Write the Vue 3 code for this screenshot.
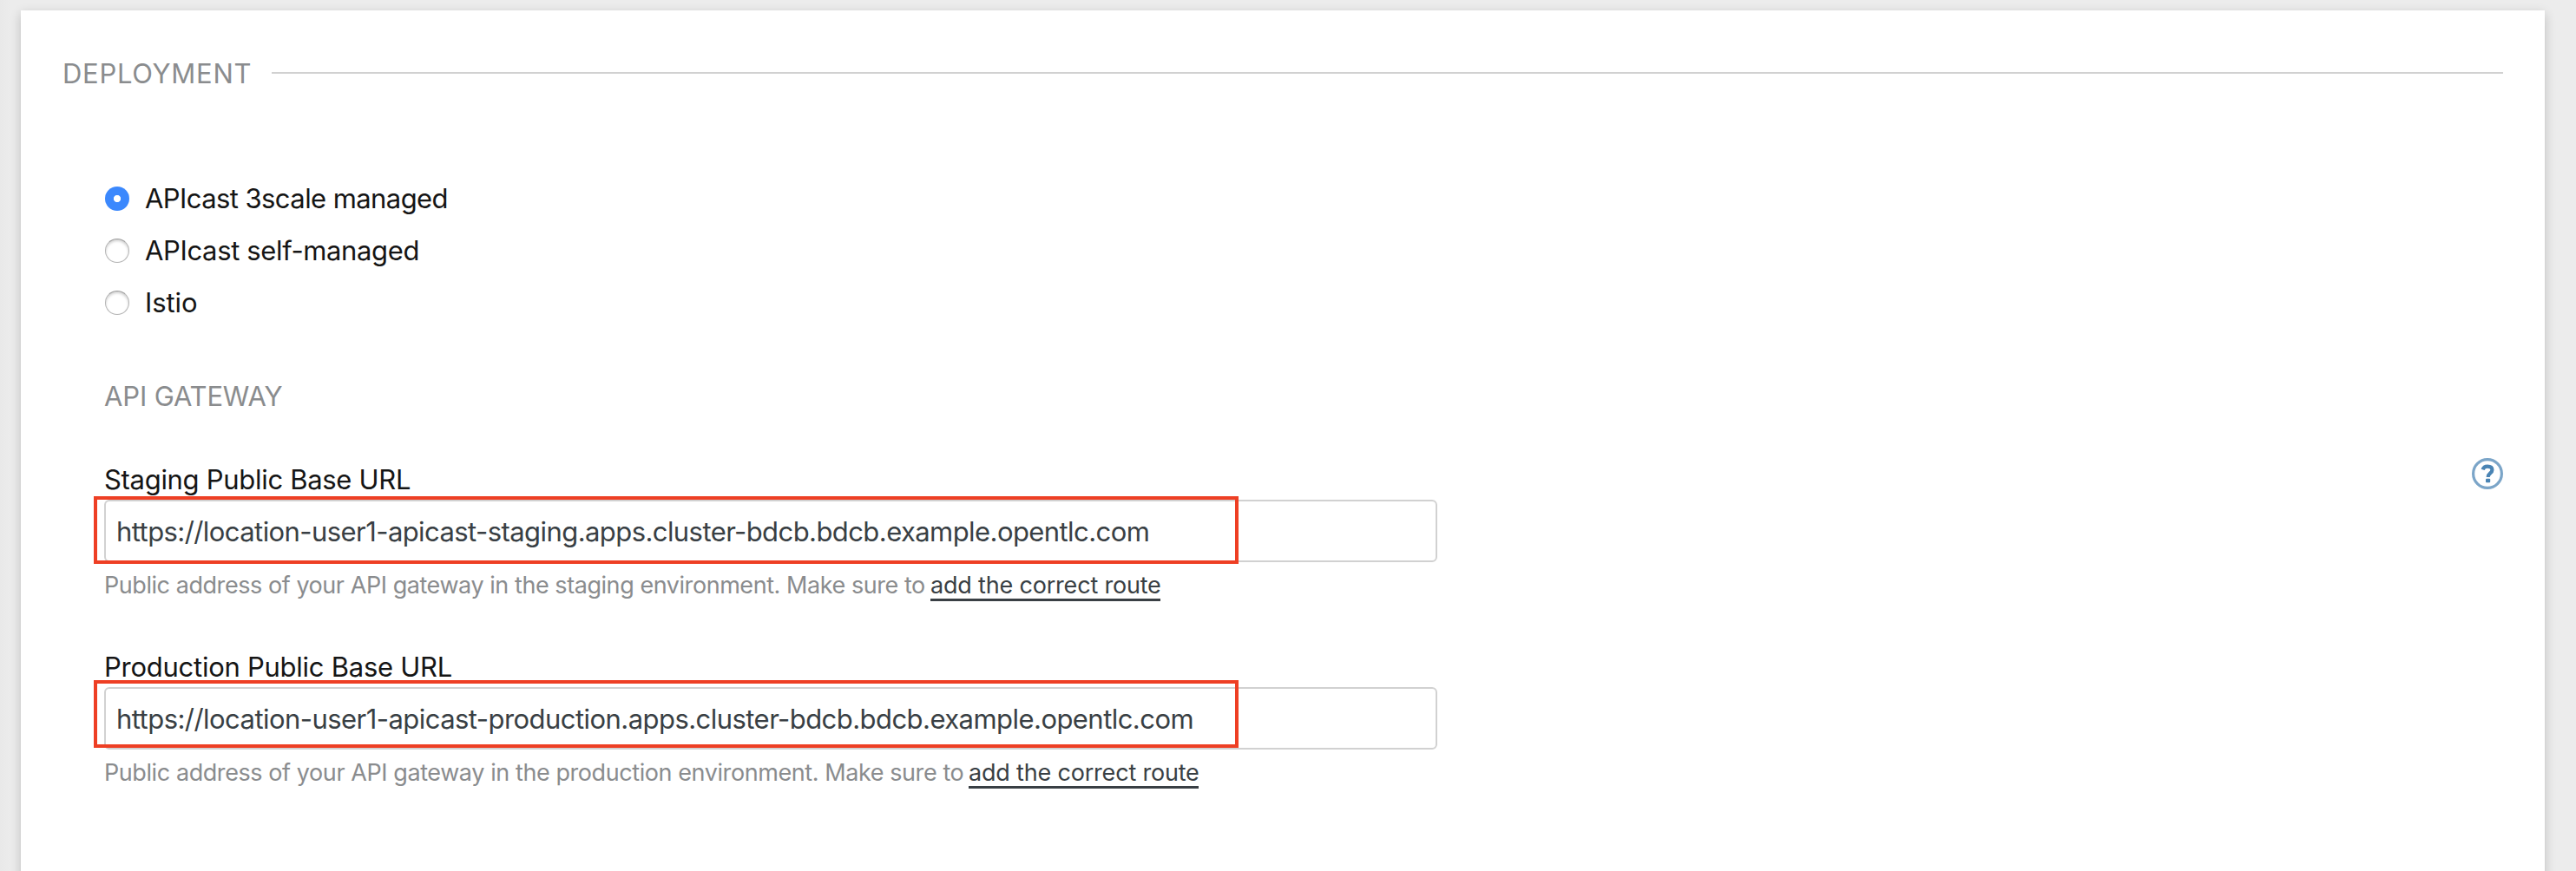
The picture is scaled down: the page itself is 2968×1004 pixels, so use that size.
<script setup>
import { ref } from 'vue'

const deployment = ref('managed')
const options = [
  { value: 'managed', label: 'APIcast 3scale managed' },
  { value: 'self-managed', label: 'APIcast self-managed' },
  { value: 'istio', label: 'Istio' },
]

const fields = ref([
  {
    id: 'staging',
    label: 'Staging Public Base URL',
    url: 'https://location-user1-apicast-staging.apps.cluster-bdcb.bdcb.example.opentlc.com',
    hint: 'Public address of your API gateway in the staging environment. Make sure to',
  },
  {
    id: 'production',
    label: 'Production Public Base URL',
    url: 'https://location-user1-apicast-production.apps.cluster-bdcb.bdcb.example.opentlc.com',
    hint: 'Public address of your API gateway in the production environment. Make sure to',
  },
])
</script>

<template>
  <div class="page">
    <main class="panel">
      <header class="section-head">
        <h2>DEPLOYMENT</h2>
        <span class="rule"></span>
      </header>

      <div class="options">
        <label v-for="o in options" :key="o.value" class="option" :class="o.value">
          <input v-model="deployment" type="radio" name="deployment" :value="o.value" />
          <span>{{ o.label }}</span>
        </label>
      </div>

      <div class="gateway">
        <div class="fields">
          <h3>API GATEWAY</h3>
          <div v-for="f in fields" :key="f.id" class="field" :class="f.id">
            <label :for="f.id">{{ f.label }}</label>
            <div class="control">
              <input :id="f.id" v-model="f.url" type="text" spellcheck="false" />
              <span class="highlight"></span>
            </div>
            <p class="hint">
              <span class="hint-text">{{ f.hint }}</span>
              <a>add the correct route</a>
            </p>
          </div>
        </div>
        <svg class="help" viewBox="0 0 36 36" width="36" height="36">
          <circle cx="18" cy="18" r="16.4" fill="none" stroke="#7ba5c8" stroke-width="3.2" />
          <path d="M12.6 13.4C13.4 10.8 15.4 9.7 18 9.7c3.2 0 5.4 1.4 5.4 4 0 3.9-4.7 3.7-4.7 8.3" fill="none" stroke="#4a84b4" stroke-width="4.2" />
          <rect x="16" y="23.8" width="5.2" height="4.4" rx="1" fill="#4a84b4" />
        </svg>
      </div>
    </main>
  </div>
</template>

<style>
body {
  margin: 0;
  background: #ececec;
}
</style>

<style scoped>
.page {
  box-sizing: border-box;
  height: 1004px;
  padding: 12px 36px 0 24px;
  overflow: hidden;
  background: linear-gradient(90deg, #e9e9e9 0, #ececec 12px);
  font: 400 31px/40px Inter, "Liberation Sans", sans-serif;
  color: #151515;
}
.panel {
  box-sizing: border-box;
  height: 1040px;
  padding: 53px 48px 0;
  background: #fff;
  box-shadow: 0 4px 12px rgba(0, 0, 0, 0.2);
}
h2,
h3,
p {
  margin: 0;
  font-size: inherit;
  font-weight: 400;
}
.section-head {
  display: flex;
  align-items: center;
  height: 40px;
  color: #8a8c8e;
}
h2 {
  width: 241px;
  letter-spacing: 0.7px;
}
.rule {
  flex: 1;
  height: 2px;
  margin-bottom: 2px;
  background: #d1d1d1;
}
.options {
  padding: 94px 0 0 48px;
}
.option {
  display: flex;
  align-items: center;
  height: 60px;
  letter-spacing: -0.58px;
}
.option.self-managed {
  letter-spacing: -0.36px;
}
.option.istio {
  letter-spacing: -0.1px;
}
.option input {
  appearance: none;
  box-sizing: border-box;
  width: 28px;
  height: 28px;
  margin: 0 18px 0 1px;
  border: 1px solid #b4b4b4;
  border-top-color: #989898;
  border-radius: 50%;
  background: #fff;
  box-shadow: inset 0 2px 3px rgba(0, 0, 0, 0.18);
}
.option input:checked {
  border: 0;
  background: radial-gradient(circle, #fff 3.7px, #3b88fd 4.5px);
  box-shadow: none;
}
.gateway {
  display: flex;
  justify-content: space-between;
  align-items: flex-start;
  padding: 58px 0 0 48px;
}
.fields {
  width: 1536px;
}
h3 {
  margin-bottom: 56px;
  color: #8a8c8e;
  letter-spacing: -0.15px;
}
.field {
  margin-bottom: 57px;
}
.field > label {
  display: block;
  height: 43px;
}
.staging > label {
  letter-spacing: -0.3px;
}
.production > label {
  letter-spacing: -0.26px;
}
.control {
  position: relative;
}
.control input {
  display: block;
  box-sizing: border-box;
  width: 100%;
  height: 72px;
  padding: 0 12px;
  border: 2px solid #d1d1d1;
  border-radius: 6px;
  outline: 0;
  background: #fff;
  font: inherit;
  color: #393f44;
}
.staging input {
  letter-spacing: -0.575px;
}
.production input {
  letter-spacing: -0.55px;
}
.highlight {
  position: absolute;
  box-sizing: border-box;
  top: -4px;
  left: -12px;
  width: 1319px;
  height: 78px;
  border: 4px solid #ee3f24;
  pointer-events: none;
}
.production .highlight {
  top: -8px;
}
.hint {
  display: flex;
  height: 36px;
  padding-top: 8px;
  font-size: 27px;
  line-height: 38px;
  color: #8a8c8e;
  white-space: nowrap;
}
.hint-text {
  width: 952px;
  letter-spacing: -0.445px;
}
.production .hint-text {
  width: 996px;
  letter-spacing: -0.42px;
}
.hint a {
  box-sizing: border-box;
  width: 265px;
  height: 37px;
  border-bottom: 3px solid #393f44;
  color: #393f44;
  letter-spacing: -0.19px;
}
.help {
  margin-top: 91px;
}
</style>
